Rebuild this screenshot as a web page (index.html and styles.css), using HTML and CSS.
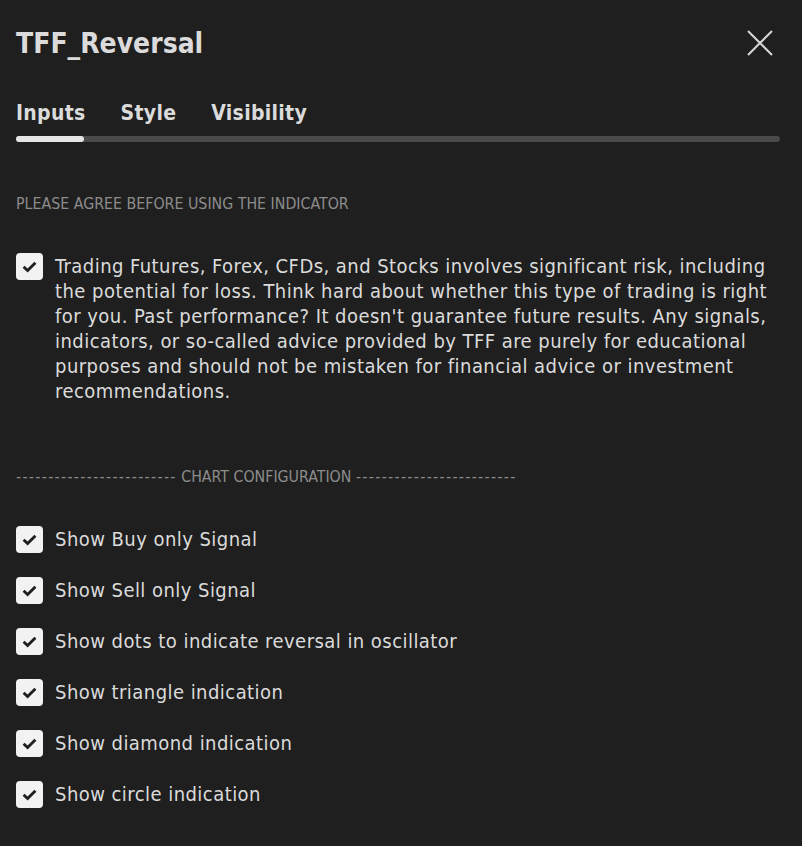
FILE: index.html
```html
<!doctype html>
<html>
    <head>
        <meta charset="utf-8">
        <title>TFF_Reversal settings</title>
        <link rel="stylesheet" href="styles.css">
    </head>
    <body>
        <div class="dialog">
            <div class="header">
                <h1 class="title">TFF_Reversal</h1>
                <button class="close" aria-label="Close">
                    <svg width="26" height="26" viewBox="0 0 26 26"><path d="M1 1L25 25M25 1L1 25" stroke="currentColor" stroke-width="2" fill="none"/></svg>
                </button>
            </div>

            <div class="tabs">
                <span class="tab active">Inputs</span>
                <span class="tab">Style</span>
                <span class="tab">Visibility</span>
            </div>
            <div class="track"><div class="track-active"></div></div>

            <div class="content">
                <div class="group-title">PLEASE AGREE BEFORE USING THE INDICATOR</div>

                <label class="check check-long">
                    <span class="box"><svg width="15" height="12" viewBox="0 0 15 12"><path d="M1.6 5.8L5.6 9.6L13.4 1.8" stroke="currentColor" stroke-width="2.9" fill="none"/></svg></span>
                    <span class="text">Trading Futures, Forex, CFDs, and Stocks involves significant risk, including the potential for loss. Think hard about whether this type of trading is right for you. Past performance? It doesn't guarantee future results. Any signals, indicators, or so-called advice provided by TFF are purely for educational purposes and should not be mistaken for financial advice or investment recommendations.</span>
                </label>

                <div class="group-title divider"><span class="dashes">-------------------------</span> CHART CONFIGURATION <span class="dashes">-------------------------</span></div>

                <div class="options">
                    <label class="check">
                        <span class="box"><svg width="15" height="12" viewBox="0 0 15 12"><path d="M1.6 5.8L5.6 9.6L13.4 1.8" stroke="currentColor" stroke-width="2.9" fill="none"/></svg></span>
                        <span class="text">Show Buy only Signal</span>
                    </label>
                    <label class="check">
                        <span class="box"><svg width="15" height="12" viewBox="0 0 15 12"><path d="M1.6 5.8L5.6 9.6L13.4 1.8" stroke="currentColor" stroke-width="2.9" fill="none"/></svg></span>
                        <span class="text">Show Sell only Signal</span>
                    </label>
                    <label class="check">
                        <span class="box"><svg width="15" height="12" viewBox="0 0 15 12"><path d="M1.6 5.8L5.6 9.6L13.4 1.8" stroke="currentColor" stroke-width="2.9" fill="none"/></svg></span>
                        <span class="text">Show dots to indicate reversal in oscillator</span>
                    </label>
                    <label class="check">
                        <span class="box"><svg width="15" height="12" viewBox="0 0 15 12"><path d="M1.6 5.8L5.6 9.6L13.4 1.8" stroke="currentColor" stroke-width="2.9" fill="none"/></svg></span>
                        <span class="text">Show triangle indication</span>
                    </label>
                    <label class="check">
                        <span class="box"><svg width="15" height="12" viewBox="0 0 15 12"><path d="M1.6 5.8L5.6 9.6L13.4 1.8" stroke="currentColor" stroke-width="2.9" fill="none"/></svg></span>
                        <span class="text">Show diamond indication</span>
                    </label>
                    <label class="check">
                        <span class="box"><svg width="15" height="12" viewBox="0 0 15 12"><path d="M1.6 5.8L5.6 9.6L13.4 1.8" stroke="currentColor" stroke-width="2.9" fill="none"/></svg></span>
                        <span class="text">Show circle indication</span>
                    </label>
                </div>
            </div>
        </div>
    </body>
</html>
```
FILE: styles.css
```css
* {
    box-sizing: border-box;
}

html, body {
    margin: 0;
    height: 100%;
    background: #1f1f1f;
}

body {
    font-family: "DejaVu Sans Condensed", "DejaVu Sans", sans-serif;
    color: #dbdbdb;
}

.dialog {
    padding: 0 22px 0 16px;
}

.header {
    display: flex;
    align-items: center;
    justify-content: space-between;
    height: 86px;
}

.title {
    margin: 0;
    font-size: 28px;
    font-weight: bold;
    color: #dbdbdb;
}

.close {
    display: flex;
    padding: 0;
    margin-right: 7px;
    border: none;
    background: none;
    color: #d6d6d6;
    cursor: pointer;
}

.tabs {
    display: flex;
    gap: 35px;
    height: 50px;
    padding-top: 3px;
    align-items: center;
}

.tab {
    font-size: 21px;
    font-weight: bold;
    letter-spacing: 0.3px;
    color: #dbdbdb;
}

.track {
    height: 6px;
    border-radius: 3px;
    background: #4a4a4a;
}

.track-active {
    width: 68px;
    height: 6px;
    border-radius: 3px;
    background: #e6e6e6;
}

.content {
    padding-top: 52px;
}

.group-title {
    font-size: 15.8px;
    color: #8c8c8c;
    line-height: 20px;
}

.dashes {
    letter-spacing: 1.3px;
}

.check {
    display: flex;
    align-items: flex-start;
    gap: 12px;
}

.box {
    flex: none;
    display: flex;
    align-items: center;
    justify-content: center;
    width: 27px;
    height: 27px;
    border-radius: 4px;
    background: #f2f2f2;
    color: #1f1f1f;
}

.text {
    font-size: 20px;
    line-height: 25px;
    letter-spacing: 0.45px;
    padding-top: 1px;
}

.check-long {
    margin-top: 39px;
}

.check-long .text {
    max-width: 720px;
}

.divider {
    margin-top: 63px;
    white-space: nowrap;
}

.options {
    display: flex;
    flex-direction: column;
    gap: 24px;
    margin-top: 39px;
}
```
